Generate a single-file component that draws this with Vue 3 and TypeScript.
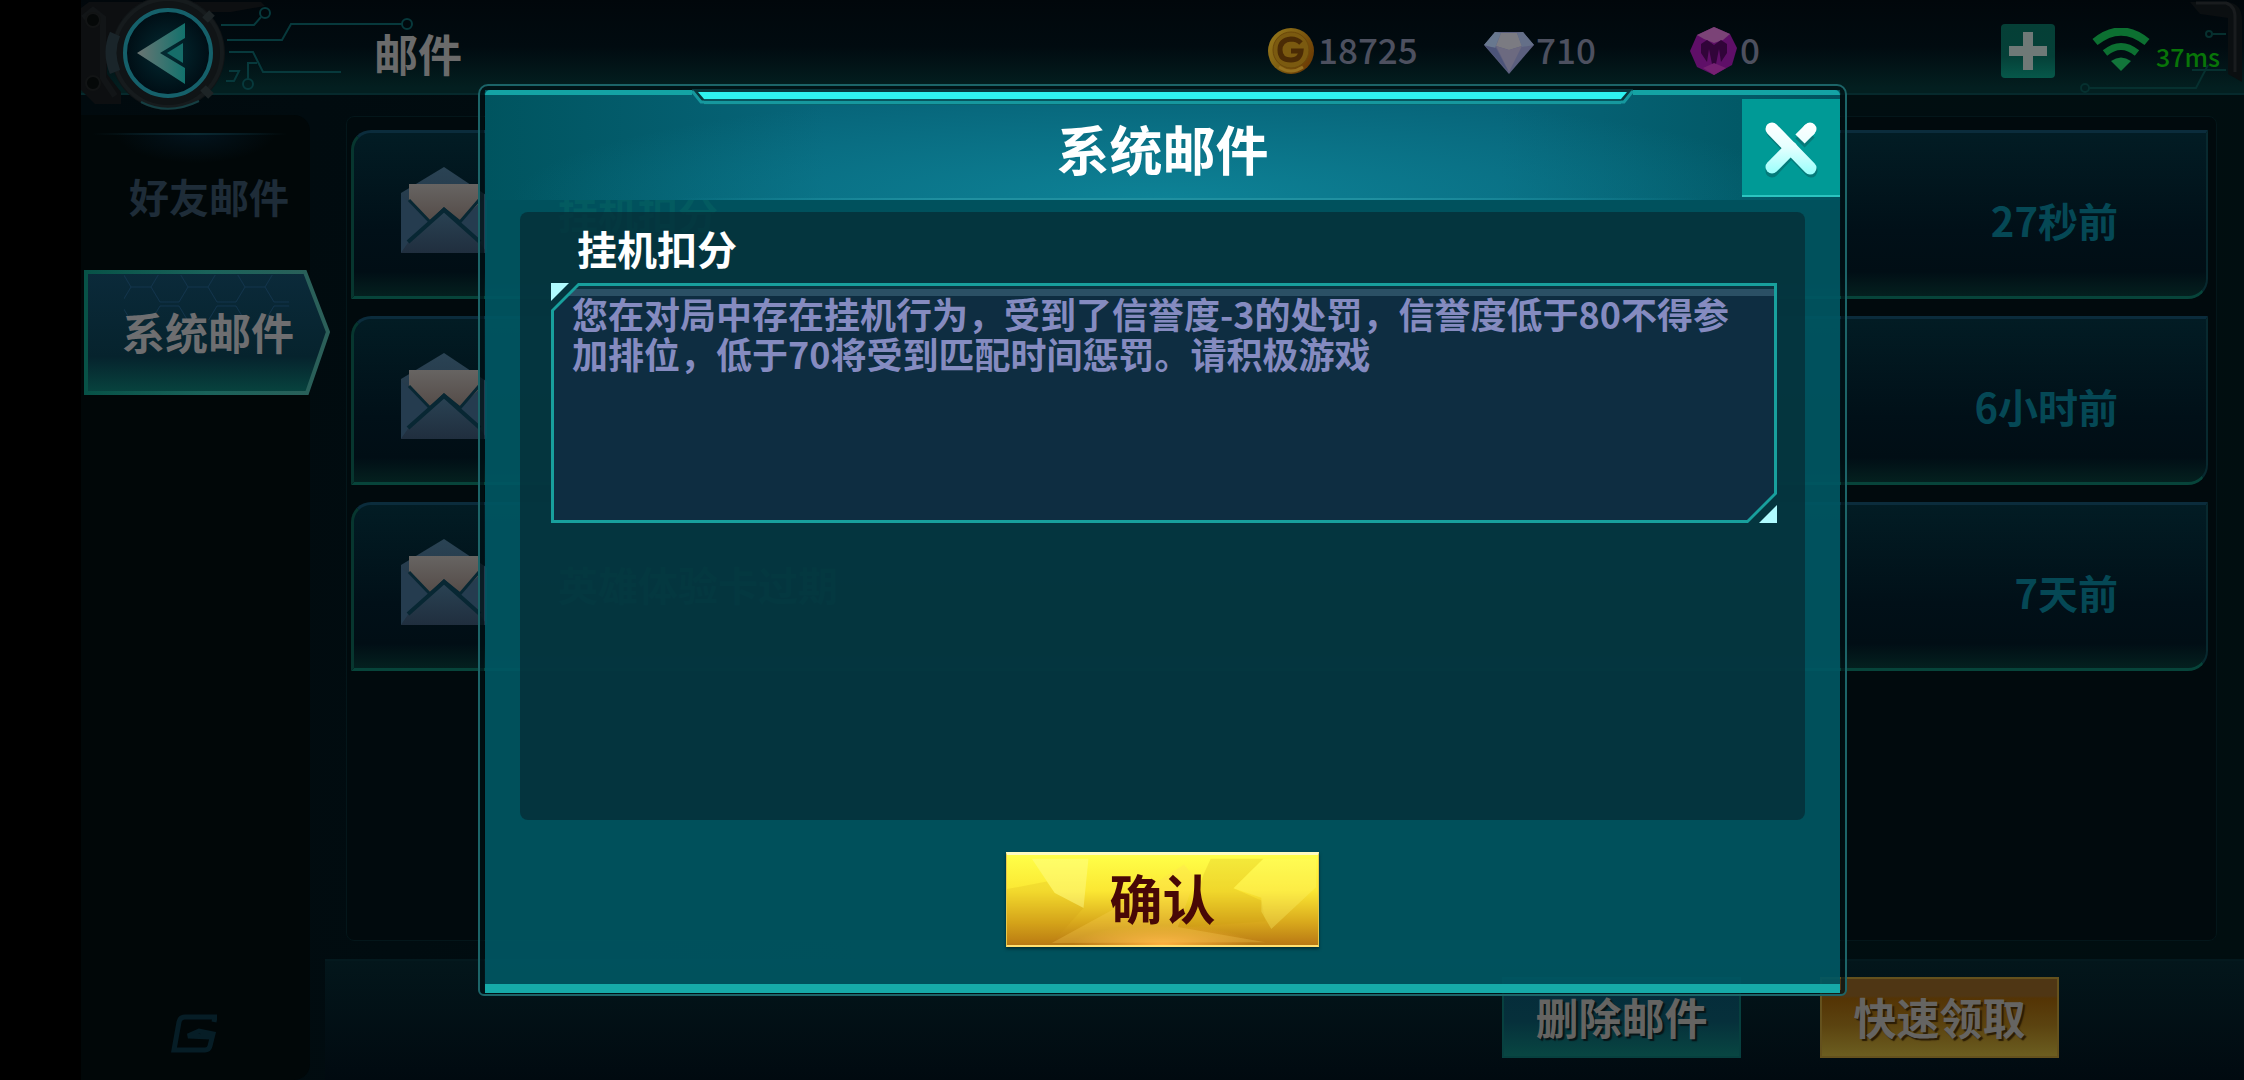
<script setup lang="ts">
import { ref } from 'vue'

interface Mail {
  id: number
  title: string
  time: string
}

const mails: Mail[] = [
  { id: 1, title: '挂机扣分', time: '27秒前' },
  { id: 2, title: '', time: '6小时前' },
  { id: 3, title: '英雄体验卡过期', time: '7天前' },
]

const tabs = ['好友邮件', '系统邮件']
const activeTab = ref('系统邮件')
const dialogOpen = ref(true)

const message =
  '您在对局中存在挂机行为，受到了信誉度-3的处罚，信誉度低于80不得参加排位，低于70将受到匹配时间惩罚。请积极游戏'

function closeDialog(): void {
  dialogOpen.value = false
}
</script>

<template>
  <div class="screen">
    <header class="topbar">
      <svg class="machinery" width="340" height="112" viewBox="0 0 340 112" aria-hidden="true">
        <g fill="none" stroke="#07393c" stroke-width="2">
          <path d="M140 25H173L180 17" />
          <circle cx="184" cy="13" r="5" />
          <path d="M146 40H201L210 24H321" />
          <circle cx="326" cy="24" r="5" />
          <path d="M148 52H172L182 72H260" />
          <path d="M176 63H167V79" />
          <circle cx="167" cy="84" r="5" />
          <path d="M148 71H158L153 81H145" />
        </g>
        <path d="M0 8L8 2H180L184 6L150 12H60L40 20L38 34L26 40V74L40 92V104H14L0 90Z" fill="#0d0f11" />
        <path d="M2 18L12 10L22 18V78L34 96" fill="none" stroke="#121517" stroke-width="6" />
        <circle cx="12" cy="20" r="7" fill="#050808" stroke="#121415" stroke-width="2" />
        <circle cx="12" cy="83" r="7" fill="#050808" stroke="#121415" stroke-width="2" />
        <circle cx="87" cy="53" r="57" fill="#101416" />
        <circle cx="87" cy="53" r="54" fill="none" stroke="#161b1d" stroke-width="4" />
        <path d="M34 34Q26 52 34 72" fill="none" stroke="#1a252a" stroke-width="11" />
        <path d="M124 20L131 13M122 88L130 96" stroke="#1d2426" stroke-width="8" />
        <path d="M60 102Q87 116 118 101" fill="none" stroke="#153e42" stroke-width="2" />
      </svg>
      <button class="back" type="button" aria-label="返回">
        <svg width="92" height="92" viewBox="0 0 92 92" aria-hidden="true">
          <defs>
            <linearGradient id="arrow" x1="0" x2="1">
              <stop offset="0" stop-color="#6b7472" />
              <stop offset="0.5" stop-color="#3f7470" />
              <stop offset="1" stop-color="#12716c" />
            </linearGradient>
            <radialGradient id="lens">
              <stop offset="0" stop-color="#032b33" />
              <stop offset="1" stop-color="#000d14" />
            </radialGradient>
          </defs>
          <circle cx="46" cy="46" r="43" fill="url(#lens)" stroke="#15606a" stroke-width="4" />
          <path d="M15 46L63 16V31L38 46L63 61V77Z" fill="url(#arrow)" />
          <path d="M45 46L61 36V56Z" fill="#166d69" />
        </svg>
      </button>
      <h1 class="page-title">邮件</h1>
      <div class="status">
        <div class="coin">
          <svg width="48" height="50" viewBox="0 0 48 50" aria-hidden="true">
            <defs>
              <linearGradient id="gold" x1="0" x2="1" y2="0.6">
                <stop offset="0" stop-color="#987a1c" />
                <stop offset="0.5" stop-color="#806012" />
                <stop offset="1" stop-color="#6d3d05" />
              </linearGradient>
            </defs>
            <circle cx="24" cy="25" r="23" fill="url(#gold)" />
            <circle cx="24" cy="24" r="18" fill="#7b5a10" stroke="#6b480a" stroke-width="1" />
            <path d="M34 17Q30 13 24 13Q13 14 13 24Q13 34 24 34Q33 34 34 25H24" fill="none" stroke="#4b2b05" stroke-width="5" />
            <path d="M12 41Q24 49 36 41" fill="none" stroke="#94701f" stroke-width="3" />
          </svg>
          <span>18725</span>
        </div>
        <div class="gem">
          <svg width="52" height="50" viewBox="0 0 52 50" aria-hidden="true">
            <path d="M12 6H40L51 19L26 48L1 19Z" fill="#5b5f7e" />
            <path d="M12 6L1 19L12 22L18 7Z" fill="#68788f" />
            <path d="M18 7H34L39 20L26 24L13 20Z" fill="#7b7b82" />
            <path d="M40 6L51 19L39 21L34 7Z" fill="#646f88" />
            <path d="M13 20L26 24L39 20L26 46Z" fill="#6c6a80" />
            <path d="M2 20L13 22L25 45Z" fill="#4c5479" />
          </svg>
          <span>710</span>
        </div>
        <div class="token">
          <svg width="50" height="50" viewBox="0 0 50 50" aria-hidden="true">
            <path d="M25 1L41 8L48 22L43 39L25 49L8 41L1 25L8 9Z" fill="#5f0f68" />
            <path d="M25 1L41 8L34 14L25 17L15 13L8 9Z" fill="#7b4377" />
            <path d="M12 18L18 14L25 19L32 14L38 18V27L32 36L30 23L27 38H23L20 23L18 36L12 27Z" fill="#310439" />
            <path d="M14 42L25 37L37 42L25 49Z" fill="#752072" />
          </svg>
          <span>0</span>
        </div>
        <button class="plus" type="button" aria-label="充值">
          <svg width="38" height="38" viewBox="0 0 38 38" aria-hidden="true">
            <path d="M14 0H24V14H38V24H24V38H14V24H0V14H14Z" fill="#6f7977" />
          </svg>
        </button>
        <div class="network">
          <svg width="60" height="44" viewBox="0 0 60 44" aria-hidden="true">
            <g fill="none" stroke="#0c7031">
              <path d="M4 14Q30 -7 56 14" stroke-width="8" />
              <path d="M14 25Q30 12 46 25" stroke-width="7" />
            </g>
            <path d="M20 33Q30 26 40 33L30 43Z" fill="#12753a" />
          </svg>
          <span>37ms</span>
        </div>
      </div>
      <svg class="corner" width="166" height="100" viewBox="0 0 166 100" aria-hidden="true">
        <g fill="none" stroke="#06302f" stroke-width="2">
          <circle cx="7" cy="88" r="4" />
          <path d="M11 88H118L130 65M114 70H148M134 34H148" />
          <circle cx="131" cy="34" r="3" />
        </g>
        <path d="M112 2H150Q164 4 164 20V82L150 74V18L122 14Z" fill="#0b0f11" />
        <path d="M118 3H148Q158 6 157 20V72" fill="none" stroke="#191c1e" stroke-width="3" />
      </svg>
    </header>

    <div class="body">
      <nav class="sidebar">
        <button
          v-for="tab in tabs"
          :key="tab"
          type="button"
          class="tab"
          :class="{ active: tab === activeTab }"
          @click="activeTab = tab"
        >
          <svg v-if="tab === activeTab" class="tab-frame" width="246" height="125" viewBox="0 0 246 125" aria-hidden="true">
            <defs>
              <linearGradient id="tabfill" x2="0" y2="1">
                <stop offset="0" stop-color="#0b2a3a" />
                <stop offset="0.7" stop-color="#06232d" />
                <stop offset="1" stop-color="#07443f" />
              </linearGradient>
              <linearGradient id="tabline" x1="0" x2="1" y1="0" y2="0">
                <stop offset="0" stop-color="#075247" />
                <stop offset="0.5" stop-color="#1a625a" />
                <stop offset="1" stop-color="#2c5f59" />
              </linearGradient>
              <pattern id="hex" width="57" height="34" patternUnits="userSpaceOnUse">
                <path d="M0 17H10L19 2H38L47 17H57M10 17L19 32H38L47 17" fill="none" stroke="#12344c" stroke-width="1" />
              </pattern>
            </defs>
            <path d="M2 2H221L244 62L223 123H2Z" fill="url(#tabfill)" stroke="url(#tabline)" stroke-width="4" />
            <path d="M40 5H205V50H40Z" fill="url(#hex)" />
          </svg>
          <span>{{ tab }}</span>
        </button>
        <svg class="brand" width="46" height="40" viewBox="0 0 46 40" aria-hidden="true">
          <path d="M43 8L44 3H14Q9 3 8 8L3 36H34Q38 36 39 32L42 20L28 17L17 22L39 23" fill="none" stroke="#061d26" stroke-width="5" />
        </svg>
      </nav>

      <main class="main">
        <ul class="mail-list">
          <li v-for="mail in mails" :key="mail.id" class="mail">
            <svg class="envelope" width="88" height="90" viewBox="0 0 88 90" aria-hidden="true">
              <defs>
                <linearGradient id="paper" x2="0" y2="1">
                  <stop offset="0" stop-color="#676462" />
                  <stop offset="1" stop-color="#4d423e" />
                </linearGradient>
                <linearGradient id="cover" x2="0" y2="1">
                  <stop offset="0" stop-color="#2a4354" />
                  <stop offset="1" stop-color="#202e3e" />
                </linearGradient>
              </defs>
              <path d="M44 2L86 30V88H1V28Z" fill="url(#cover)" />
              <path d="M9 19H79V40L44 70L9 36Z" fill="url(#paper)" />
              <path d="M1 30L30 58L8 78L1 88ZM87 30L60 58L80 78L87 88Z" fill="#253c4f" />
              <path d="M9 35L30 57L44 44L60 57L79 35" fill="none" stroke="#082733" stroke-width="3" />
              <path d="M1 88L8 78L44 45L80 78L87 88Z" fill="url(#cover)" />
              <path d="M8 77L44 45L80 77" fill="none" stroke="#082733" stroke-width="4" />
            </svg>
            <span class="mail-title">{{ mail.title }}</span>
            <time class="mail-time">{{ mail.time }}</time>
          </li>
        </ul>
        <footer class="actions">
          <button type="button" class="action delete">删除邮件</button>
          <button type="button" class="action claim">快速领取</button>
        </footer>
      </main>
    </div>

    <div v-if="dialogOpen" class="overlay">
      <section class="dialog" role="dialog" aria-modal="true" aria-labelledby="dialog-title">
        <div class="strip" aria-hidden="true">
          <i class="strip-side left"></i>
          <svg width="12" height="16" viewBox="0 0 12 16">
            <path d="M0 0H12V14L2 3H0Z" fill="#08393f" />
            <path d="M0 3H1L9 13H12" fill="none" stroke="#16989e" stroke-width="3" />
            <path d="M6 3H12V10Z" fill="#2ff2f0" />
          </svg>
          <i class="strip-mid"></i>
          <svg width="12" height="16" viewBox="0 0 12 16">
            <path d="M12 0H0V14L10 3H12Z" fill="#08393f" />
            <path d="M12 3H11L3 13H0" fill="none" stroke="#16989e" stroke-width="3" />
            <path d="M6 3H0V10Z" fill="#2ff2f0" />
          </svg>
          <i class="strip-side right"></i>
        </div>
        <div class="dialog-inner">
          <header class="dialog-head">
            <h2 id="dialog-title">系统邮件</h2>
            <button type="button" class="close" aria-label="关闭" @click="closeDialog">
              <svg width="98" height="98" viewBox="0 0 98 98" aria-hidden="true">
                <defs>
                  <linearGradient id="cross" gradientUnits="userSpaceOnUse" x1="0" y1="24" x2="0" y2="76">
                    <stop offset="0" stop-color="#ffffff" />
                    <stop offset="0.45" stop-color="#e6ffff" />
                    <stop offset="1" stop-color="#96fffb" />
                  </linearGradient>
                </defs>
                <path d="M31 33L69 72M30 72L48 53" fill="none" stroke="#057a7a" stroke-width="13" stroke-linecap="round" />
                <path d="M68 34L58 44" fill="none" stroke="#057a7a" stroke-width="13" />
                <g fill="none" stroke="url(#cross)" stroke-width="13">
                  <path d="M30 68L49 49" stroke-linecap="round" />
                  <path d="M68 30L67 31" stroke-linecap="round" />
                  <path d="M68 30L58 40" />
                  <path d="M30 30L68 69" stroke-linecap="round" />
                </g>
              </svg>
            </button>
          </header>
          <div class="dialog-body">
            <article class="letter">
              <h3>挂机扣分</h3>
              <div class="message">
                <div class="message-frame">
                  <p>{{ message }}</p>
                </div>
              </div>
            </article>
            <button type="button" class="confirm" @click="closeDialog">
              <svg class="facets" viewBox="0 0 313 95" preserveAspectRatio="none" aria-hidden="true">
                <path d="M25 4H82L77 56L48 40Z" fill="#ffff9a" opacity="0.4" />
                <path d="M0 36L40 28L48 40L77 56L45 93H0Z" fill="#c48a10" opacity="0.15" />
                <path d="M45 93L120 50L178 10L190 24L172 76L260 92Z" fill="#ffd860" opacity="0.25" />
                <path d="M205 4H258L228 35L256 48L260 70L180 76L198 20Z" fill="#c89a10" opacity="0.2" />
                <path d="M258 4H311V34L266 78L256 60V45L228 35Z" fill="#fff870" opacity="0.3" />
              </svg>
              <span>确认</span>
            </button>
          </div>
        </div>
      </section>
    </div>
  </div>
</template>

<style>
html,
body {
  background: #000;
}
</style>

<style scoped>
* {
  box-sizing: border-box;
}

button {
  margin: 0;
  padding: 0;
  border: 0;
  background: none;
  color: inherit;
  font: inherit;
  cursor: pointer;
}

svg {
  display: block;
}

h1,
h2,
h3,
p,
ul {
  margin: 0;
  padding: 0;
  font-weight: inherit;
}

.screen {
  position: relative;
  display: flex;
  flex-direction: column;
  min-height: 100vh;
  padding-left: 81px;
  background: #000;
  color: #6b6b6b;
  font-family: 'Noto Sans CJK SC', 'Noto Sans', sans-serif;
  font-weight: 700;
}

.topbar {
  position: relative;
  z-index: 1;
  display: flex;
  align-items: center;
  height: 95px;
  padding: 13px 0 0 41px;
  border-bottom: 2px solid #06292c;
  background: linear-gradient(#01070b, #010b10 50%, #031f20 95%);
}

.machinery {
  position: absolute;
  top: 0;
  left: 0;
}

.corner {
  position: absolute;
  top: 0;
  right: 0;
}

.back {
  position: relative;
  flex: none;
  width: 92px;
  height: 92px;
  border-radius: 50%;
}

.page-title {
  position: relative;
  margin-left: 160px;
  font-size: 44px;
  line-height: 48px;
}

.status {
  position: relative;
  z-index: 1;
  display: flex;
  align-items: center;
  margin-left: auto;
  padding-bottom: 4px;
}

.status > div {
  display: flex;
  align-items: center;
  color: #4d505f;
  font-weight: 500;
  font-size: 35px;
  line-height: 40px;
}

.status span {
  padding-bottom: 4px;
}

.status .coin {
  gap: 3px;
  width: 216px;
}

.status .gem {
  gap: 1px;
  width: 206px;
}

.status .token {
  gap: 1px;
  width: 312px;
}

.plus {
  display: grid;
  place-items: center;
  width: 54px;
  height: 54px;
  margin-right: 36px;
  border-radius: 4px;
  background: linear-gradient(#053f36, #054038 60%, #06584a);
}

.status .network {
  gap: 5px;
  width: 153px;
  color: #087508;
  font-size: 25px;
}

.status .network span {
  padding: 10px 0 0;
}

.network svg {
  margin-bottom: 2px;
}

.body {
  display: flex;
  flex: 1;
  background: linear-gradient(100deg, #010a0e, #010e12 40%, #010e10);
}

.sidebar {
  display: flex;
  flex: none;
  flex-direction: column;
  width: 229px;
  margin-top: 20px;
  border-radius: 0 16px 16px 0;
  background: #010708;
}

.tab {
  height: 125px;
  margin-top: 18px;
  padding: 0 32px 0 48px;
  background:
    linear-gradient(90deg, transparent 5%, #0a2a33 50%, transparent 90%) top / 100% 2px no-repeat,
    radial-gradient(ellipse 80px 30px at 50% 0, #03141e, transparent);
  color: #1e2c38;
  font-size: 40px;
  line-height: 44px;
  text-align: left;
  white-space: nowrap;
}

.tab.active {
  position: relative;
  width: 249px;
  margin-top: 12px;
  padding-left: 41px;
  padding-bottom: 4px;
  background: none;
  color: #6e6e70;
  font-size: 43px;
}

.tab span {
  position: relative;
}

.tab-frame {
  position: absolute;
  top: 0;
  left: 3px;
}

.brand {
  margin: auto 0 26px 90px;
}

.main {
  display: flex;
  flex: 1;
  flex-direction: column;
  min-width: 0;
  margin-left: 15px;
}

.mail-list {
  display: flex;
  flex: 1;
  flex-direction: column;
  gap: 17px;
  margin: 21px 27px 18px 21px;
  padding: 13px 8px 14px 4px;
  border: 1px solid #04161a;
  border-radius: 8px;
  background: #010a0d;
  list-style: none;
}

.mail {
  display: flex;
  align-items: center;
  height: 169px;
  padding: 0 88px 0 46px;
  border: 3px solid;
  border-color: #0b2c3c #08292f #07443a #07362f;
  border-width: 3px 2px 3px 3px;
  border-radius: 20px 0 20px 0;
  background: linear-gradient(#021c24, #011018 60%, #010e15 85%, #04201f);
}

.envelope {
  flex: none;
  margin-bottom: 10px;
}

.mail-title {
  margin-left: 70px;
  padding-bottom: 6px;
  color: #2f9a50;
  font-size: 40px;
  line-height: 40px;
}

.mail-time {
  margin-left: auto;
  padding-top: 10px;
  color: #054855;
  font-size: 40px;
  line-height: 48px;
}

.actions {
  display: flex;
  gap: 79px;
  justify-content: flex-end;
  height: 121px;
  padding: 16px 185px 0 0;
  border-top: 2px solid #04191e;
  background: linear-gradient(#03161b, #010a10);
}

.action {
  width: 239px;
  height: 81px;
  padding-bottom: 4px;
  color: #656462;
  font-size: 43px;
  line-height: 72px;
  text-shadow: 2px 2px 1px #071417;
}

.delete {
  border: 2px solid #07403f;
  background: linear-gradient(#052b3a, #06303b 55%, #084642);
}

.claim {
  border: 2px solid #64511d;
  background: linear-gradient(#4f3614 22%, #543405 25%, #5b4310 60%, #6c5e20);
  text-shadow: 2px 2px 1px #2a1c05;
}

/* The dialog is centred in the area to the right of the black bezel. */
.overlay {
  position: absolute;
  z-index: 2;
  inset: 0 0 0 81px;
  display: flex;
  align-items: center;
  justify-content: center;
}

.dialog {
  position: relative;
  width: calc(100% - 80px);
  max-width: 1369px;
  padding: 4px 5px 1px;
  border: 2px solid #1c6468;
  border-radius: 10px 10px 6px 6px;
  box-shadow: inset 0 0 0 4px rgba(0, 16, 20, 0.7);
}

.dialog-inner {
  border-bottom: 9px solid #16aaa8;
  background: rgba(0, 86, 98, 0.93);
}

.strip {
  position: absolute;
  z-index: 1;
  top: 3px;
  right: 5px;
  left: 5px;
  display: flex;
  height: 16px;
}

.strip-side {
  flex: 0 1 207px;
  height: 5px;
  margin-top: 1px;
  background: #14a3a4;
}

.strip-side.left {
  border-top-left-radius: 5px;
}

.strip-side.right {
  border-top-right-radius: 5px;
}

.strip-mid {
  flex: 1;
  background: linear-gradient(
    #08393f 0 3px,
    #2ff2f0 3px 10px,
    #08555e 10px 12px,
    #16989e 12px 15px,
    #08656f 15px
  );
}

.dialog-head {
  position: relative;
  display: flex;
  align-items: center;
  justify-content: center;
  height: 110px;
  padding-top: 6px;
  background:
    linear-gradient(90deg, transparent 14%, #2090a0 35%, #2090a0 65%, transparent 90%) bottom / 100% 2px no-repeat,
    radial-gradient(ellipse 48% 100% at 50% 100%, rgba(16, 140, 160, 0.75), transparent),
    linear-gradient(90deg, #00545f, #07657a 25%, #07657a 75%, #00545f);
}

.dialog-head h2 {
  color: #fff;
  font-size: 53px;
  line-height: 60px;
}

.close {
  position: absolute;
  top: 9px;
  right: 0;
  border-bottom: 2px solid #2cc4c0;
  background: #009a96;
}

.close svg {
  margin-bottom: -2px;
}

.dialog-body {
  padding: 12px 35px 37px;
}

.letter {
  min-height: 608px;
  padding: 16px 28px 0 31px;
  border-radius: 8px;
  background: rgba(6, 40, 49, 0.68);
}

.letter h3 {
  padding-left: 26px;
  color: #fff;
  font-size: 40px;
  line-height: 40px;
}

.message {
  position: relative;
  margin-top: 15px;
}

.message::before,
.message::after {
  position: absolute;
  width: 18px;
  height: 18px;
  background: #b0fbff;
  content: '';
}

.message::before {
  top: 0;
  left: 0;
  clip-path: polygon(0 0, 100% 0, 0 100%);
}

.message::after {
  right: 0;
  bottom: 0;
  clip-path: polygon(100% 0, 100% 100%, 0 100%);
}

.message-frame {
  padding: 3px;
  background: #18a09d;
  clip-path: polygon(27px 0, 100% 0, 100% calc(100% - 29px), calc(100% - 29px) 100%, 0 100%, 0 27px);
}

.message p {
  min-height: 234px;
  padding: 7px 24px 0 18px;
  background: linear-gradient(#0b3340 0 3px, #2b5065 3px 10px, #0e2d41 10px);
  clip-path: polygon(25px 0, 100% 0, 100% calc(100% - 27px), calc(100% - 27px) 100%, 0 100%, 0 25px);
  color: #858bc0;
  font-size: 36px;
  line-height: 40px;
}

.confirm {
  position: relative;
  display: block;
  width: 313px;
  height: 95px;
  margin: 32px auto 0;
  padding-bottom: 6px;
  border: 1px solid #e8c84a;
  border-top: 3px solid #fffbc0;
  border-bottom: 2px solid #ffe070;
  background:
    radial-gradient(ellipse 90px 20px at 50% 100%, #ffb040, transparent),
    linear-gradient(#ffff48, #fbe733 40%, #d8a81c 75%, #b87814);
  box-shadow: 0 2px 3px rgba(0, 30, 35, 0.7);
  color: #480806;
  font-size: 53px;
  line-height: 80px;
}

.confirm span {
  position: relative;
}

.facets {
  position: absolute;
  inset: 0;
  width: 100%;
  height: 100%;
}
</style>
